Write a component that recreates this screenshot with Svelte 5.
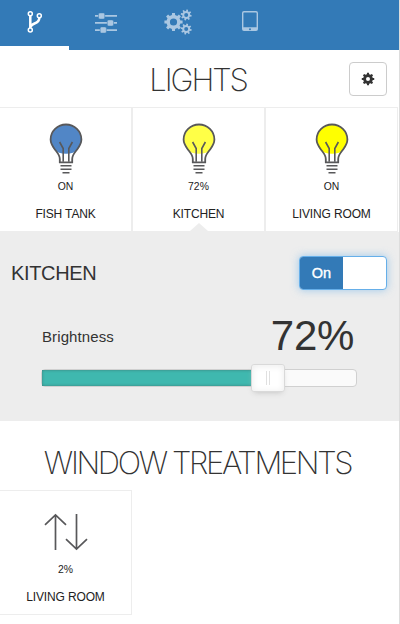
<script>
  let brightness = $state(72);
  const lights = [
    { name: 'FISH TANK', status: 'ON', color: '#5186c6' },
    { name: 'KITCHEN', status: '72%', color: '#ffff47', active: true },
    { name: 'LIVING ROOM', status: 'ON', color: '#ffff00' }
  ];

  function gear(cx, cy, r, teeth, inner, hole, turn = 0) {
    let d = '';
    const step = (Math.PI * 2) / teeth;
    const point = (rad, a) => `${(cx + rad * Math.cos(a)).toFixed(2)} ${(cy + rad * Math.sin(a)).toFixed(2)}`;
    for (let i = 0; i < teeth; i++) {
      const a = i * step + turn;
      d += `${i ? 'L' : 'M'}${point(inner, a - step * 0.29)}L${point(r, a - step * 0.2)}L${point(r, a + step * 0.2)}L${point(inner, a + step * 0.29)}`;
    }
    return `${d}ZM${cx - hole} ${cy}a${hole} ${hole} 0 1 0 ${hole * 2} 0a${hole} ${hole} 0 1 0 ${-hole * 2} 0Z`;
  }
</script>

<div class="app">
  <nav>
    <button class="tab active" aria-label="Home">
      <svg width="16" height="24" viewBox="0 0 16 24" fill="none" stroke="#fff">
        <circle cx="3.3" cy="3.8" r="2" stroke-width="1.5" />
        <circle cx="12.3" cy="5.7" r="2" stroke-width="1.5" />
        <circle cx="3.3" cy="20" r="2" stroke-width="1.5" />
        <path d="M3.3 6v12M12.3 8c0 6.5-8 4.5-8.7 9" stroke-width="2.5" />
      </svg>
    </button>
    <button class="tab" aria-label="Controls">
      <svg width="22" height="20" viewBox="0 0 22 20" fill="#aac7e2">
        <path d="M0 2h22v1.8H0zM0 9h22v1.8H0zM0 16.2h22V18H0z" />
        <g stroke="#337ab7" stroke-width=".5">
          <rect x="3.5" y="-.1" width="6.2" height="6.2" rx="1.4" />
          <rect x="12.3" y="6.9" width="6.2" height="6.2" rx="1.4" />
          <rect x="5.2" y="13.9" width="6.2" height="6.2" rx="1.4" />
        </g>
      </svg>
    </button>
    <button class="tab" aria-label="Settings">
      <svg width="28" height="26" viewBox="0 0 28 26" fill="#aac7e2" fill-rule="evenodd">
        <path d={gear(9.5, 13, 9.2, 8, 7.1, 3.6)} />
        <path d={gear(22.2, 5.9, 5.5, 8, 4, 2, 0.2)} />
        <path d={gear(22.2, 20.1, 5.5, 8, 4, 2, 0.2)} />
      </svg>
    </button>
    <button class="tab" aria-label="Devices">
      <svg width="16" height="20" viewBox="0 0 16 20">
        <path fill="#aac7e2" fill-rule="evenodd" d="M2 0h12a2 2 0 0 1 2 2v16a2 2 0 0 1-2 2H2a2 2 0 0 1-2-2V2a2 2 0 0 1 2-2ZM2 1.4a.6.6 0 0 0-.6.6v14.2h13.2V2a.6.6 0 0 0-.6-.6ZM8 17.2a1 1 0 1 0 0 2 1 1 0 0 0 0-2Z" />
      </svg>
    </button>
  </nav>

  <header class="title">
    <h1 class="lights">LIGHTS</h1>
    <button class="cog" aria-label="Configure">
      <svg width="14" height="14" viewBox="0 0 14 14" fill="#333" fill-rule="evenodd">
        <path d={gear(7, 7, 6.3, 8, 4.9, 2)} />
      </svg>
    </button>
  </header>

  <div class="tiles">
    {#each lights as light}
      <div class="tile" class:selected={light.active}>
        <svg class="bulb" width="34" height="52" viewBox="0 0 34 52" fill="none" stroke="#58585a">
          <path fill={light.color} stroke="none" d="M17 1.8A15 15 0 0 0 5.4 26.5Q9 30.8 17 30.8T28.6 26.5A15 15 0 0 0 17 1.8Z" />
          <path stroke-width="1.8" d="M10.8 39.3V36c0-4-2.7-6.5-5.1-9.8C3.3 23 1.6 20.2 1.6 16.6A15.4 15.1 0 0 1 32.4 16.6C32.4 20.2 30.7 23 28.3 26.2C25.9 29.5 23.2 32 23.2 36v3.3Z" />
          <path stroke-width="1.6" d="M10.6 19l3.6 6.5v13.3M23.4 19l-3.6 6.5v13.3" />
          <path stroke-width="1.5" d="M11.5 42.7h11M11.5 46.2h11M13.5 49.8h7" />
        </svg>
        <span class="status">{light.status}</span>
        <span class="name">{light.name}</span>
      </div>
    {/each}
  </div>

  <section class="panel">
    <div class="panel-head">
      <h2>KITCHEN</h2>
      <button class="switch" aria-label="Power"><span>On</span></button>
    </div>
    <div class="level">
      <span class="caption">Brightness</span>
      <span class="value">{brightness}%</span>
    </div>
    <div class="track">
      <div class="fill" style="width: {brightness}%"></div>
      <div class="handle" style="left: {brightness}%"></div>
    </div>
  </section>

  <header class="title second">
    <h1 class="windows">WINDOW TREATMENTS</h1>
  </header>
  <div class="tiles">
    <div class="tile">
      <svg class="arrows" width="44" height="38" viewBox="0 0 44 38" fill="none" stroke="#58585a" stroke-width="1.7">
        <path d="M11.5 37V2M1 11.8 11.5 2 22 11.8M32.5 1v35M22 26.2 32.500 36 43 26.200" />
      </svg>
      <span class="status">2%</span>
      <span class="name">LIVING ROOM</span>
    </div>
  </div>
</div>

<style>
  :global(body) { background: #fff; overflow: hidden; }
  .app {
    box-sizing: border-box;
    width: 400px;
    height: 624px;
    border-right: 1px solid #ddd;
    overflow: hidden;
    color: #333;
    font-family: "Liberation Sans", Arial, sans-serif;
  }
  button { padding: 0; border: 0; background: none; font: inherit; }
  nav { display: flex; height: 50px; background: #337ab7; }
  .tab {
    box-sizing: border-box;
    display: flex;
    width: 72px;
    height: 50px;
    justify-content: center;
    padding-top: 13px;
    align-items: flex-start;
  }
  .tab.active { width: 69px; padding-top: 10px; border-bottom: 4px solid #fff; }
  .tab:nth-child(2) { width: 74px; }
  .tab:nth-child(3) { padding-top: 9px; width: 70px; }
  .tab:nth-child(4) { padding-top: 11px; width: 74px; }
  svg { display: block; flex: none; }
  h1, h2 { margin: 0; }
  .title { position: relative; height: 57px; }
  h1 {
    font: 200 31px/57px Inter, sans-serif;
    text-align: center;
    white-space: nowrap;
  }
  .lights { letter-spacing: -2.1px; padding: 1px 3px 0 0; }
  .windows { letter-spacing: -2.36px; padding-right: 4px; }
  .second { height: 69px; }
  .second h1 { line-height: 83px; }
  .cog {
    box-sizing: border-box;
    position: absolute;
    right: 12px;
    top: 12px;
    width: 38px;
    height: 34px;
    display: flex;
    align-items: center;
    justify-content: center;
    border: 1px solid #ccc;
    border-radius: 4px;
    background: #fff;
  }
  .tiles { display: flex; margin-left: -1px; }
  .tile {
    box-sizing: border-box;
    position: relative;
    display: flex;
    flex-direction: column;
    align-items: center;
    width: 133px;
    height: 125px;
    border: 1px solid #ededed;
    color: #222;
  }
  .bulb { margin-top: 15px; }
  .arrows { margin: 22px 0 7px; }
  .status { margin-top: 5px; font-size: 10.4px; line-height: 13px; }
  .name { margin-top: 13px; font-size: 12px; line-height: 16px; letter-spacing: -.15px; }
  .selected::after {
    content: "";
    position: absolute;
    bottom: 0;
    left: 57px;
    border: solid transparent;
    border-width: 0 9px 8px;
    border-bottom-color: #ededed;
  }
  .panel { box-sizing: border-box; height: 189px; background: #ededed; }
  .panel-head {
    display: flex;
    justify-content: space-between;
    padding: 24px 12px 0 11px;
  }
  h2 { font-size: 20px; line-height: 34px; font-weight: 400; letter-spacing: -.35px; }
  .switch {
    box-sizing: border-box;
    width: 88px;
    height: 34px;
    display: flex;
    overflow: hidden;
    border: 1px solid #66afe9;
    border-radius: 4px;
    background: #fff;
    box-shadow: 0 0 8px rgba(102, 175, 233, .6);
  }
  .switch span {
    width: 43px;
    line-height: 32px;
    background: #337ab7;
    color: #fff;
    font-size: 14.5px;
    -webkit-text-stroke: .4px #fff;
  }
  .level {
    display: flex;
    align-items: center;
    justify-content: space-between;
    height: 50px;
    padding: 21px 45px 0 42px;
  }
  .caption { font-size: 15px; letter-spacing: .1px; }
  .value { font-size: 42px; line-height: 50px; letter-spacing: -.3px; }
  .track {
    box-sizing: border-box;
    position: relative;
    width: 316px;
    height: 18px;
    margin: 8px 0 0 41px;
    border: 1px solid #d0d0d0;
    border-radius: 4px;
    background: #fafafa;
  }
  .fill {
    height: 16px;
    background: #3fb8af;
    box-shadow: inset 0 0 3px rgba(51, 51, 51, .45);
  }
  .handle {
    box-sizing: border-box;
    position: absolute;
    top: -6px;
    width: 34px;
    height: 28px;
    margin-left: -17px;
    border: 1px solid #d9d9d9;
    border-radius: 3px;
    background: #fff;
    box-shadow: inset 0 0 1px #fff, inset 0 1px 7px #ebebeb, 0 3px 6px -3px #bbb;
  }
  .handle::before, .handle::after {
    content: "";
    position: absolute;
    top: 6px;
    left: 14px;
    width: 1px;
    height: 14px;
    background: #e0e0e0;
  }
  .handle::after { left: 17px; }
</style>
